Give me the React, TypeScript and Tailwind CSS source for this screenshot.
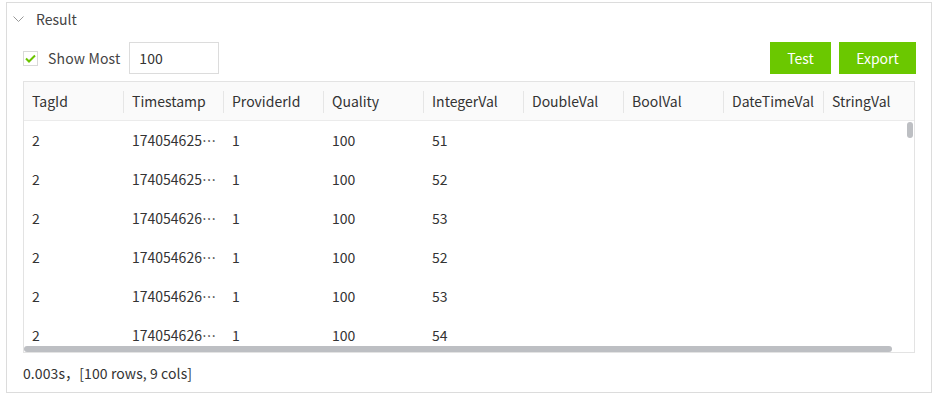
import React from "react";

const cols = ["TagId", "Timestamp", "ProviderId", "Quality", "IntegerVal", "DoubleVal", "BoolVal", "DateTimeVal", "StringVal"];
const rows = [
  ["2", "174054625\u22EF", "1", "100", "51"],
  ["2", "174054625\u22EF", "1", "100", "52"],
  ["2", "174054626\u22EF", "1", "100", "53"],
  ["2", "174054626\u22EF", "1", "100", "52"],
  ["2", "174054626\u22EF", "1", "100", "53"],
  ["2", "174054626\u22EF", "1", "100", "54"],
];

export default function App() {
  return (
    <div
      className="w-[941px] h-[396px] bg-white text-[#333] text-[14px] overflow-hidden"
      style={{ fontFamily: '"Noto Sans CJK SC", "Noto Sans", sans-serif' }}
    >
      <div className="ml-[6px] mt-[2px] w-[926px] h-[391px] border border-[#dcdcdc] flex flex-col">
        <div className="h-[32px] shrink-0 flex items-center pl-[6px]">
          <svg width="11" height="7" viewBox="0 0 11 7" className="mr-[12px]">
            <polyline points="0.5,0.5 5.5,5.5 10.5,0.5" fill="none" stroke="#999" strokeWidth="1" />
          </svg>
          <span className="text-[#444]">Result</span>
        </div>
        <div className="px-[16px] flex flex-col flex-1 min-h-0">
          <div className="h-[32px] shrink-0 flex items-center mt-[7px]">
            <div className="w-[15px] h-[15px] border border-[#d9d9d9] bg-white flex items-center justify-center">
              <svg width="11" height="9" viewBox="0 0 11 9">
                <polyline points="1,4.5 4,7.5 10,1.5" fill="none" stroke="#6bc400" strokeWidth="2" />
              </svg>
            </div>
            <span className="ml-[10px] text-[#444] tracking-[0.15px]">Show Most</span>
            <div className="ml-[9px] w-[90px] h-[32px] border border-[#dcdcdc] flex items-center pl-[9px]">100</div>
            <div className="flex-1" />
            <button className="w-[61px] h-[32px] bg-[#6bc800] text-white">Test</button>
            <button className="ml-[8px] w-[77px] h-[32px] bg-[#6bc800] text-white -mr-[1px]">Export</button>
          </div>
          <div className="mt-[7px] shrink-0 w-[892px] h-[272px] border border-[#e3e3e3] relative overflow-hidden">
            <div className="flex h-[39px] bg-[#fafafa] border-b border-[#ebebeb] w-[900px]">
              {cols.map((c, i) => (
                <div key={c} className="w-[100px] shrink-0 flex items-center relative pl-[8px]">
                  <span>{c}</span>
                  {i < cols.length - 1 && (
                    <div className="absolute right-0 top-[9px] h-[22px] w-px bg-[#e6e6e6]" />
                  )}
                </div>
              ))}
            </div>
            {rows.map((r, ri) => (
              <div key={ri} className="flex h-[39px] w-[900px]">
                {cols.map((c, ci) => (
                  <div key={c} className="w-[100px] shrink-0 flex items-center pl-[8px]">
                    {r[ci] ?? ""}
                  </div>
                ))}
              </div>
            ))}
            <div className="absolute left-0 bottom-0 w-[868px] h-[6px] rounded-full bg-[#bdbfc3]" />
            <div className="absolute left-[883px] top-[40px] w-[6px] h-[16px] rounded-full bg-[#bdbfc3]" />
          </div>
          <div className="flex-1 flex items-center pt-[1px] tracking-[0.1px]">0.003s，[100 rows, 9 cols]</div>
        </div>
      </div>
    </div>
  );
}
